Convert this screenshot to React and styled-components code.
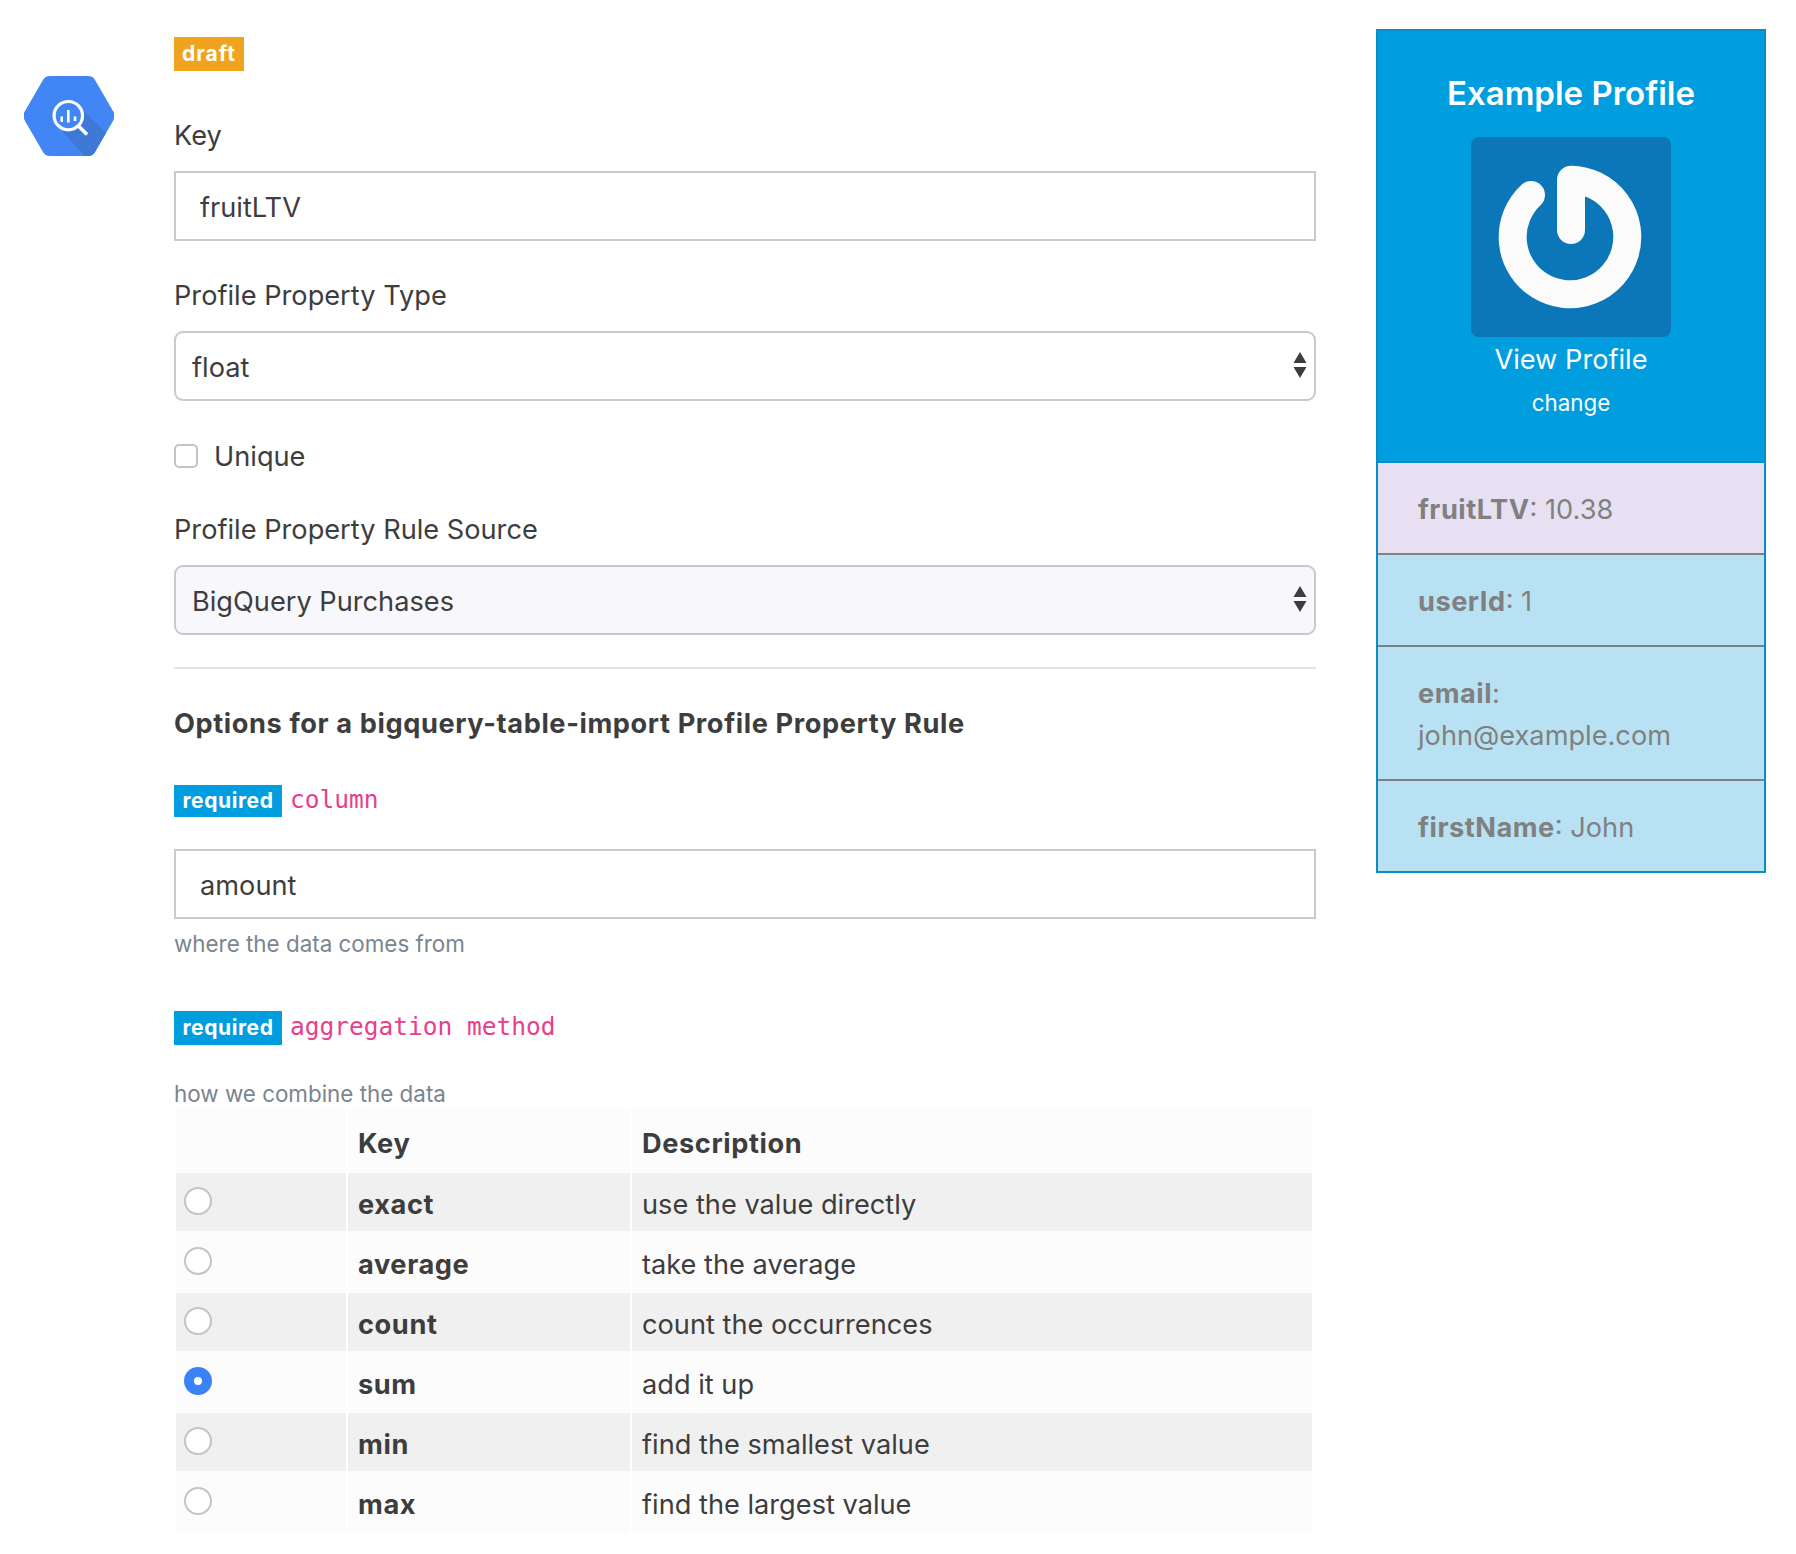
import React from "react";
import styled, { createGlobalStyle } from "styled-components";

const GlobalStyle = createGlobalStyle`
  html, body { margin: 0; padding: 0; background: #fff; }
  body { font-family: Inter, "Liberation Sans", sans-serif; color: #3d3d3d; }
`;

const rows = [
  { key: "exact", text: "use the value directly" },
  { key: "average", text: "take the average" },
  { key: "count", text: "count the occurrences" },
  { key: "sum", text: "add it up", checked: true },
  { key: "min", text: "find the smallest value" },
  { key: "max", text: "find the largest value" },
];

const BigQueryLogo = () => (
  <Logo viewBox="0 0 90 80" width="90" height="80">
    <path
      d="M1 35 L19 4 Q21 0 26 0 L64 0 Q69 0 71 4 L89 35 Q92 39 89 45 L71 76 Q69 80 64 80 L26 80 Q21 80 19 76 L1 45 Q-2 39 1 35 Z"
      fill="#4285f4"
    />
    <path
      d="M59 34 L82 57 L71 76 Q69 80 64 80 L61 80 L39 56 Z"
      fill="#3f79d8"
    />
    <circle cx="44.300" cy="39.700" r="14.200" fill="#4285f4" stroke="#fff" strokeWidth="3.200" />
    <path d="M54.500 50 L63 58.500" stroke="#fff" strokeWidth="3.600" />
    <path d="M37.700 40.500 V46 M44.300 34 V46.500 M51 40.500 V45" stroke="#fff" strokeWidth="2.600" />
  </Logo>
);

const SelectArrows = () => (
  <Arrows viewBox="0 0 14 26" width="14" height="26">
    <path d="M7 0 L13.500 11 H0.500 Z M7 26 L0.500 15 H13.500 Z" fill="#3d3d3d" />
  </Arrows>
);

const SelectField = ({ value, tinted }) => (
  <SelectWrap>
    <Select $tinted={tinted} defaultValue={value}>
      <option>{value}</option>
    </Select>
    <SelectArrows />
  </SelectWrap>
);

const App = () => (
  <Page>
    <GlobalStyle />
    <LogoCol>
      <BigQueryLogo />
    </LogoCol>
    <Main>
      <DraftBadge>draft</DraftBadge>
      <Label $top={47}>Key</Label>
      <TextInput defaultValue="fruitLTV" />
      <Label $top={37}>Profile Property Type</Label>
      <SelectField value="float" />
      <CheckRow>
        <Checkbox type="checkbox" />
        <span>Unique</span>
      </CheckRow>
      <Label $top={38}>Profile Property Rule Source</Label>
      <SelectField value="BigQuery Purchases" tinted />
      <Rule />
      <Heading>Options for a bigquery-table-import Profile Property Rule</Heading>

      <OptionRow $top={41} $height={32}>
        <RequiredBadge $height={32}>required</RequiredBadge>
        <OptionName>column</OptionName>
      </OptionRow>
      <TextInput defaultValue="amount" />
      <Help>where the data comes from</Help>

      <OptionRow $top={52} $height={34}>
        <RequiredBadge $height={34}>required</RequiredBadge>
        <OptionName>aggregation method</OptionName>
      </OptionRow>
      <Help $top={0}>how we combine the data</Help>

      <OptionsTable>
        <colgroup>
          <col width="170" />
          <col width="282" />
          <col />
        </colgroup>
        <thead>
          <tr>
            <HeadCell />
            <HeadCell>Key</HeadCell>
            <HeadCell>Description</HeadCell>
          </tr>
        </thead>
        <tbody>
          {rows.map((row) => (
            <BodyRow key={row.key}>
              <RadioCell>
                <Radio type="radio" name="method" defaultChecked={row.checked} />
              </RadioCell>
              <KeyCell>{row.key}</KeyCell>
              <DescCell>{row.text}</DescCell>
            </BodyRow>
          ))}
        </tbody>
      </OptionsTable>
    </Main>

    <Sidebar>
      <ProfileHead>
        <ProfileTitle>Example Profile</ProfileTitle>
        <Avatar>
          <svg viewBox="0 0 200 200" width="200" height="200">
            <path
              d="M60 58 A57.300 57.300 0 1 0 100 42.700 L100 93"
              fill="none"
              stroke="#fbfbfb"
              strokeWidth="28"
              strokeLinecap="round"
              strokeLinejoin="round"
            />
          </svg>
        </Avatar>
        <ViewLink>View Profile</ViewLink>
        <ChangeLink>change</ChangeLink>
      </ProfileHead>
      <PropRow $active>
        <b>fruitLTV</b>: 10.38
      </PropRow>
      <PropRow>
        <b>userId</b>: 1
      </PropRow>
      <PropRow>
        <b>email</b>:<br />
        john@example.com
      </PropRow>
      <PropRow>
        <b>firstName</b>: John
      </PropRow>
    </Sidebar>
  </Page>
);

export default App;

const Page = styled.div`
  display: flex;
  align-items: flex-start;
  width: 1796px;
  height: 1554px;
  padding-top: 29px;
  box-sizing: border-box;
  overflow: hidden;
`;

const LogoCol = styled.div`
  width: 174px;
  padding: 47px 0 0 24px;
  box-sizing: border-box;
  flex: none;
`;

const Logo = styled.svg`
  display: block;
`;

const Main = styled.div`
  width: 1142px;
  padding-top: 8px;
  flex: none;
  font-size: 27.2px;
`;

const DraftBadge = styled.div`
  width: 70px;
  height: 34px;
  background: #f0a31e;
  color: #fff;
  font-size: 21px;
  font-weight: 700;
  letter-spacing: 1px;
  line-height: 34px;
  text-align: center;
`;

const Label = styled.div`
  margin-top: ${(p) => p.$top}px;
  margin-bottom: 17px;
  height: 36px;
  line-height: 36px;
`;

const TextInput = styled.input`
  display: block;
  width: 100%;
  height: 70px;
  box-sizing: border-box;
  padding: 2px 24px 0;
  border: 2px solid #c8c8cf;
  border-radius: 0;
  outline: none;
  background: #fff;
  color: #3d3d3d;
  font: 400 27.2px Inter, sans-serif;
`;

const SelectWrap = styled.div`
  position: relative;
`;

const Select = styled.select`
  display: block;
  width: 100%;
  height: 70px;
  box-sizing: border-box;
  padding: 2px 16px 0;
  appearance: none;
  border: 2px solid #c8c8cf;
  border-radius: 9px;
  outline: none;
  background: ${(p) => (p.$tinted ? "#f8f8fc" : "#fff")};
  color: #3d3d3d;
  font: 400 27.2px Inter, sans-serif;
`;

const Arrows = styled.svg`
  position: absolute;
  right: 9px;
  top: 21px;
`;

const CheckRow = styled.label`
  display: flex;
  align-items: center;
  gap: 16px;
  height: 36px;
  margin-top: 37px;
`;

const Checkbox = styled.input`
  appearance: none;
  width: 24px;
  height: 24px;
  margin: 0;
  border: 2px solid #c4c4c4;
  border-radius: 5px;
  background: #fff;
`;

const Rule = styled.hr`
  height: 2px;
  margin: 32px 0 35px;
  border: 0;
  background: #e4e4e4;
`;

const Heading = styled.div`
  height: 40px;
  line-height: 40px;
  font-weight: 700;
  letter-spacing: 0.6px;
`;

const OptionRow = styled.div`
  display: flex;
  align-items: center;
  gap: 8px;
  height: ${(p) => p.$height}px;
  margin-top: ${(p) => p.$top}px;
  margin-bottom: 32px;
`;

const RequiredBadge = styled.span`
  width: 108px;
  height: ${(p) => p.$height}px;
  line-height: ${(p) => p.$height}px;
  background: #009ddf;
  color: #fff;
  font-size: 21px;
  font-weight: 700;
  letter-spacing: 0.6px;
  text-align: center;
`;

const OptionName = styled.code`
  padding-bottom: 4px;
  color: #e83e8c;
  font: 400 24.500px "DejaVu Sans Mono", monospace;
`;

const Help = styled.div`
  height: 32px;
  line-height: 34px;
  margin-top: ${(p) => p.$top ?? 8}px;
  color: #7b858e;
  font-size: 22.400px;
`;

const OptionsTable = styled.table`
  width: 1140px;
  border-collapse: separate;
  border-spacing: 2px 0;
  table-layout: fixed;
`;

const HeadCell = styled.th`
  height: 64px;
  padding: 4px 10px 0;
  box-sizing: border-box;
  background: #fcfcfc;
  text-align: left;
  font-weight: 700;
  letter-spacing: 0.6px;
`;

const BodyRow = styled.tr`
  height: 62px;
  background: #fcfcfc;
  &:nth-child(odd) {
    height: 58px;
    background: #f0f0f0;
  }
`;

const RadioCell = styled.td`
  padding: 0 8px 3px;
  vertical-align: middle;
`;

const KeyCell = styled.td`
  padding: 4px 10px 0;
  font-weight: 700;
  letter-spacing: 0.6px;
`;

const DescCell = styled.td`
  padding: 4px 10px 0;
`;

const Radio = styled.input`
  appearance: none;
  display: block;
  width: 28px;
  height: 28px;
  margin: 0;
  border: 2px solid #c4c4c4;
  border-radius: 50%;
  background: #fff;
  box-sizing: border-box;
  &:checked {
    border: 10px solid #3b82f6;
  }
`;

const Sidebar = styled.div`
  width: 390px;
  margin-left: 60px;
  flex: none;
  box-sizing: border-box;
  border: 2px solid #0a8cc6;
  font-size: 27.2px;
`;

const ProfileHead = styled.div`
  height: 430px;
  box-sizing: border-box;
  padding-top: 40px;
  background: #009ddf;
  color: #fff;
  display: flex;
  flex-direction: column;
  align-items: center;
`;

const ProfileTitle = styled.div`
  height: 44px;
  line-height: 44px;
  font-size: 33px;
  font-weight: 600;
`;

const Avatar = styled.div`
  width: 200px;
  height: 200px;
  margin-top: 22px;
  border-radius: 8px;
  background: #0b76b8;
  svg { display: block; filter: blur(0.7px); }
`;

const ViewLink = styled.div`
  height: 44px;
  line-height: 44px;
  margin-top: 1px;
`;

const ChangeLink = styled.div`
  height: 32px;
  line-height: 32px;
  margin-top: 5px;
  font-size: 22.400px;
`;

const PropRow = styled.div`
  padding: 26px 40px 22px;
  line-height: 42px;
  border-top: 2px solid ${(p) => (p.$active ? "#0a8cc6" : "#808080")};
  background: ${(p) => (p.$active ? "#e7e0f2" : "#b8e2f4")};
  color: #808080;
  b { letter-spacing: 0.5px; }
`;
